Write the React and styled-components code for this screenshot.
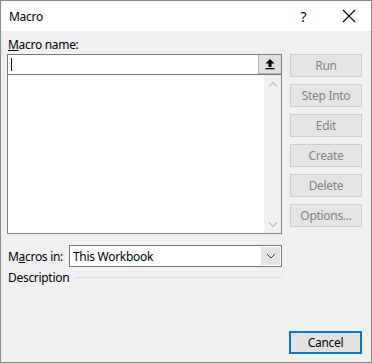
import React from "react";
import styled, { createGlobalStyle } from "styled-components";

const Global = createGlobalStyle`
  html, body {
    margin: 0;
    padding: 0;
    background: #f0f0f0;
  }
  * {
    box-sizing: border-box;
  }
`;

// tombol samping kanan
const sideButtons = ["Run", "Step Into", "Edit", "Create", "Delete", "Options..."];

export default function App() {
  return (
    <>
      <Global />
      <Window>
        <TitleBar>
          <Title>Macro</Title>
          <TitleActions>
            <TitleButton>?</TitleButton>
            <TitleButton>
              <svg width="14" height="14" viewBox="0 0 14 14">
                <path d="M1 1 L13 13 M13 1 L1 13" stroke="#000" strokeWidth="1.1" fill="none" />
              </svg>
            </TitleButton>
          </TitleActions>
        </TitleBar>

        <Body>
          <Main>
            <LeftCol>
              <Label>
                <u>M</u>acro name:
              </Label>
              <NameRow>
                <NameInput>
                  <Caret />
                </NameInput>
                <UpButton>
                  <svg width="12" height="12" viewBox="0 0 12 12">
                    <path d="M6 1 L10.5 5.5 L7.5 5.5 L7.5 9 L4.5 9 L4.5 5.5 L1.5 5.5 Z" fill="#000" />
                    <rect x="1.5" y="10" width="9" height="1.3" fill="#000" />
                  </svg>
                </UpButton>
              </NameRow>
              <ListBox>
                <ListArea />
                <ScrollBar>
                  <svg width="10" height="7" viewBox="0 0 10 7">
                    <path d="M1 5.5 L5 1.5 L9 5.5" stroke="#c2c2c2" strokeWidth="1.4" fill="none" />
                  </svg>
                  <svg width="10" height="7" viewBox="0 0 10 7">
                    <path d="M1 1.5 L5 5.5 L9 1.5" stroke="#c2c2c2" strokeWidth="1.4" fill="none" />
                  </svg>
                </ScrollBar>
              </ListBox>

              <MacrosInRow>
                <InLabel>
                  M<u>a</u>cros in:
                </InLabel>
                <Select>
                  <SelectValue>This Workbook</SelectValue>
                  <DropButton>
                    <svg width="10" height="6" viewBox="0 0 10 6">
                      <path d="M1 1 L5 5 L9 1" stroke="#333" strokeWidth="1" fill="none" />
                    </svg>
                  </DropButton>
                </Select>
              </MacrosInRow>

              <DescRow>
                <span>Description</span>
                <Rule />
              </DescRow>
            </LeftCol>

            <RightCol>
              {sideButtons.map((b) => (
                <SideButton key={b} disabled>
                  {b}
                </SideButton>
              ))}
            </RightCol>
          </Main>

          <Footer>
            <CancelButton>Cancel</CancelButton>
          </Footer>
        </Body>
      </Window>
    </>
  );
}

const Window = styled.div`
  width: 372px;
  height: 363px;
  border: 1px solid #8a8a8a;
  background: #f0f0f0;
  display: flex;
  flex-direction: column;
  font-family: "Noto Sans", "Open Sans", sans-serif;
  font-size: 12px;
  letter-spacing: -0.3px;
  color: #000;
`;

const TitleBar = styled.div`
  height: 30px;
  background: #fff;
  display: flex;
  align-items: center;
  justify-content: space-between;
  padding-left: 8px;
`;

const Title = styled.div`
  font-size: 12px;
`;

const TitleActions = styled.div`
  display: flex;
  height: 100%;
`;

const TitleButton = styled.div`
  width: 45px;
  height: 100%;
  display: flex;
  align-items: center;
  justify-content: center;
  font-size: 14px;
`;

const Body = styled.div`
  flex: 1;
  display: flex;
  flex-direction: column;
  padding: 6px 9px 8px 6px;
`;

const Main = styled.div`
  display: flex;
  gap: 8px;
`;

const LeftCol = styled.div`
  width: 275px;
  display: flex;
  flex-direction: column;
`;

const Label = styled.div`
  height: 16px;
  line-height: 16px;
  padding-left: 1px;
  margin-bottom: 1px;
`;

const NameRow = styled.div`
  display: flex;
  height: 21px;
  border: 1px solid #7a7a7a;
  background: #fff;
`;

const NameInput = styled.div`
  flex: 1;
  display: flex;
  align-items: center;
  padding-left: 3px;
`;

const Caret = styled.div`
  width: 1px;
  height: 13px;
  background: #000;
`;

const UpButton = styled.div`
  width: 23px;
  margin: 0;
  background: #e1e1e1;
  border: 1px solid #b4b4b4;
  border-right: none;
  border-top: none;
  display: flex;
  align-items: center;
  justify-content: center;
`;

const ListBox = styled.div`
  display: flex;
  height: 159px;
  border: 1px solid #828282;
  border-top: none;
  background: #fff;
`;

const ListArea = styled.div`
  flex: 1;
`;

const ScrollBar = styled.div`
  width: 17px;
  background: #f0f0f0;
  display: flex;
  flex-direction: column;
  justify-content: space-between;
  align-items: center;
  padding: 6px 0 5px;
`;

const MacrosInRow = styled.div`
  display: flex;
  align-items: center;
  margin-top: 11px;
`;

const InLabel = styled.div`
  width: 62px;
  padding-left: 1px;
`;

const Select = styled.div`
  flex: 1;
  display: flex;
  height: 22px;
  border: 1px solid #7a7a7a;
  background: #fff;
`;

const SelectValue = styled.div`
  flex: 1;
  display: flex;
  align-items: center;
  padding-left: 3px;
`;

const DropButton = styled.div`
  width: 19px;
  margin: 1px;
  background: #e5e5e5;
  display: flex;
  align-items: center;
  justify-content: center;
`;

const DescRow = styled.div`
  display: flex;
  align-items: center;
  gap: 6px;
  margin-top: 1px;
  height: 18px;
  padding-left: 1px;
`;

const Rule = styled.div`
  flex: 1;
  height: 1px;
  background: #dcdcdc;
`;

const RightCol = styled.div`
  width: 72px;
  display: flex;
  flex-direction: column;
  gap: 7px;
  padding-top: 17px;
`;

const SideButton = styled.button`
  height: 23px;
  width: 72px;
  border: 1px solid #cccccc;
  background: #e5e5e5;
  color: #838383;
  font-family: inherit;
  font-size: 12px;
  letter-spacing: inherit;
  padding: 0;
`;

const Footer = styled.div`
  margin-top: auto;
  display: flex;
  justify-content: flex-end;
`;

const CancelButton = styled.button`
  width: 73px;
  height: 23px;
  border: 2px solid #0078d7;
  background: #e1e1e1;
  color: #000;
  font-family: inherit;
  font-size: 12px;
  letter-spacing: inherit;
  padding: 0;
`;
